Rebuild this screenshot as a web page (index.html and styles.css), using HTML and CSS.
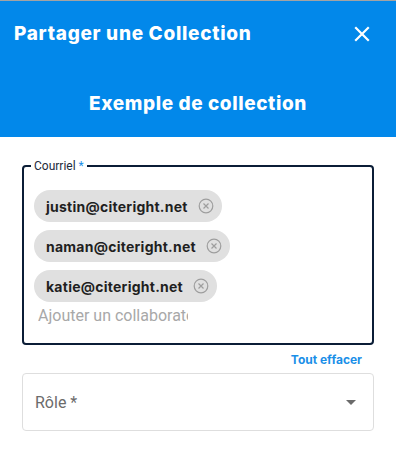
FILE: index.html
```html
<!DOCTYPE html>
<html lang="fr">

<head>
  <meta charset="UTF-8" />
  <meta name="viewport" content="width=device-width, initial-scale=1" />
  <title>Partager une Collection</title>
  <link rel="stylesheet" href="styles.css">
</head>

<body>
  <header class="dialog-header">
    <div class="title-row">
      <h1 class="title">Partager une Collection</h1>
      <button class="close-btn" aria-label="Fermer">
        <svg width="16" height="16" viewBox="0 0 16 16">
          <path d="M2 2 L14 14 M14 2 L2 14" stroke="#fff" stroke-width="2.2" stroke-linecap="square" />
        </svg>
      </button>
    </div>
    <h2 class="subtitle">Exemple de collection</h2>
  </header>

  <main class="dialog-body">
    <fieldset class="email-field">
      <legend>Courriel <span class="req">*</span></legend>
      <div class="chips">
        <div class="chip">
          <span>justin@citeright.net</span>
          <svg class="chip-x" width="16" height="16" viewBox="0 0 16 16">
            <circle cx="8" cy="8" r="6.8" fill="none" stroke="#9e9e9e" stroke-width="1.2" />
            <path d="M5.5 5.5 L10.5 10.5 M10.5 5.5 L5.5 10.5" stroke="#9e9e9e" stroke-width="1.2" />
          </svg>
        </div>
        <div class="chip">
          <span>naman@citeright.net</span>
          <svg class="chip-x" width="16" height="16" viewBox="0 0 16 16">
            <circle cx="8" cy="8" r="6.8" fill="none" stroke="#9e9e9e" stroke-width="1.2" />
            <path d="M5.5 5.5 L10.5 10.5 M10.5 5.5 L5.5 10.5" stroke="#9e9e9e" stroke-width="1.2" />
          </svg>
        </div>
        <div class="chip">
          <span>katie@citeright.net</span>
          <svg class="chip-x" width="16" height="16" viewBox="0 0 16 16">
            <circle cx="8" cy="8" r="6.8" fill="none" stroke="#9e9e9e" stroke-width="1.2" />
            <path d="M5.5 5.5 L10.5 10.5 M10.5 5.5 L5.5 10.5" stroke="#9e9e9e" stroke-width="1.2" />
          </svg>
        </div>
        <input class="add-input" type="text" placeholder="Ajouter un collaborateur" />
      </div>
    </fieldset>

    <div class="clear-row">
      <a class="clear-link" href="#">Tout effacer</a>
    </div>

    <div class="role-select">
      <span class="role-label">Rôle *</span>
      <span class="arrow"></span>
    </div>
  </main>
</body>

</html>
```

FILE: styles.css
```css
* {
  box-sizing: border-box;
}

body {
  margin: 0;
  font-family: Roboto, 'Liberation Sans', Arial, sans-serif;
  background: #fff;
  color: #212121;
}

/* Header */
.dialog-header {
  background: #0288ea;
  border-top: 1px solid #a3a3a3;
  height: 137px;
  color: #fff;
}

.title-row {
  display: flex;
  align-items: center;
  justify-content: space-between;
  padding: 21px 26px 0 14px;
}

.title,
.subtitle {
  margin: 0;
  font-family: Inter, 'Noto Sans', sans-serif;
  font-size: 19px;
  font-weight: 800;
  line-height: 24px;
  letter-spacing: 0.7px;
}

.close-btn {
  background: none;
  border: none;
  padding: 0;
  width: 16px;
  height: 16px;
  cursor: pointer;
  display: flex;
}

.subtitle {
  margin-top: 46px;
  text-align: center;
  letter-spacing: 0.6px;
}

/* Body */
.dialog-body {
  padding: 23px 22px 0;
}

.email-field {
  margin: 0;
  border: 2px solid #0b1d36;
  border-radius: 4px;
  padding: 18px 10px 14px;
  min-width: 0;
}

.email-field legend {
  font-size: 12px;
  color: #1d2a3a;
  padding: 0 3px;
  margin-left: -3px;
  line-height: 12px;
}

.req {
  color: #1a8fe8;
}

.chips {
  display: flex;
  flex-direction: column;
  align-items: flex-start;
  gap: 8px;
}

.chip {
  display: flex;
  align-items: center;
  gap: 10px;
  height: 32px;
  padding: 0 8px 0 12px;
  border-radius: 16px;
  background: #e0e0e0;
  font-family: Inter, 'Noto Sans', sans-serif;
  font-weight: 700;
  font-size: 14px;
  letter-spacing: 0.25px;
  color: #1f1f1f;
}

.chip-x {
  flex: none;
}

.add-input {
  width: 150px;
  border: none;
  outline: none;
  margin: -8px 0 0 4px;
  padding: 4px 0;
  font-family: Roboto, sans-serif;
  font-size: 16px;
  color: #333;
  background: transparent;
}

.add-input::placeholder {
  color: #a8a8a8;
}

.clear-row {
  display: flex;
  justify-content: flex-end;
  padding: 7px 12px 0 0;
}

.clear-link {
  color: #1a8fe8;
  font-family: Inter, 'Noto Sans', sans-serif;
  font-size: 12px;
  font-weight: 700;
  text-decoration: none;
}

.role-select {
  margin-top: 6px;
  height: 58px;
  border: 1px solid #dedede;
  border-radius: 4px;
  display: flex;
  align-items: center;
  justify-content: space-between;
  padding: 0 17px 0 12px;
}

.role-label {
  font-size: 16px;
  color: #6b6b6b;
}

.arrow {
  width: 0;
  height: 0;
  border-left: 5px solid transparent;
  border-right: 5px solid transparent;
  border-top: 5px solid #6b6b6b;
}
```
